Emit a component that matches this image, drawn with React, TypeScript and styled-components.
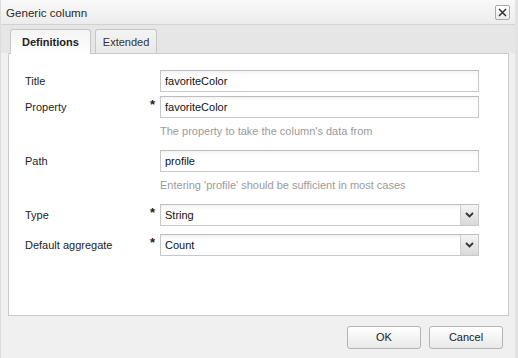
import styled, { createGlobalStyle } from 'styled-components'

const GlobalStyle = createGlobalStyle`
	html, body {
		margin: 0;
		padding: 0;
		background: #f0f0f0;
	}

	body {
		font-family: 'Liberation Sans', Arial, sans-serif;
		font-size: 11px;
		color: #1e1e1e;
	}
`

const Window = styled.div`
	width: 518px;
	height: 358px;
	box-sizing: border-box;
	display: flex;
	flex-direction: column;
	background: #f0f0f0;
	border-left: 1px solid #dcdcdc;
	border-right: 3px solid #e2e2e2;
`

const TitleBar = styled.div`
	height: 24px;
	flex: none;
	display: flex;
	align-items: center;
	justify-content: space-between;
	padding: 0 5px 0 5px;
	background: linear-gradient(#f9f9f9, #ececec);
	border-bottom: 1px solid #d2d2d2;
	font-size: 11.6px;
	color: #2a2a2a;
`

const CloseButton = styled.button`
	width: 15px;
	height: 15px;
	padding: 0;
	display: flex;
	align-items: center;
	justify-content: center;
	background: linear-gradient(#ffffff, #ececec);
	border: 1px solid #a9a9a9;
	border-radius: 2px;
	color: #444;
`

const TabStrip = styled.div`
	height: 28px;
	flex: none;
	display: flex;
	align-items: flex-end;
	gap: 4px;
	padding: 0 0 0 9px;
	background: #e6e6e6;
`

const Tab = styled.div<{ $active?: boolean }>`
	height: ${(p) => (p.$active ? 25 : 24)}px;
	box-sizing: border-box;
	padding: 0 ${(p) => (p.$active ? 11 : 7)}px;
	display: flex;
	align-items: center;
	border: 1px solid #c6c6c6;
	border-bottom: none;
	border-radius: 3px 3px 0 0;
	background: ${(p) => (p.$active ? 'linear-gradient(#f4f4f4, #ffffff)' : 'linear-gradient(#f3f3f3, #e9e9e9)')};
	font-weight: ${(p) => (p.$active ? 'bold' : 'normal')};
	color: ${(p) => (p.$active ? '#222' : '#333')};
	margin-bottom: ${(p) => (p.$active ? -1 : 0)}px;
	position: relative;
`

const Panel = styled.div`
	flex: 1;
	margin: 0 6px 0 7px;
	background: #ffffff;
	border: 1px solid #c9c9c9;
	padding: 16px 0 0 16px;
`

const FieldBlock = styled.div<{ $top: number }>`
	margin-top: ${(p) => p.$top}px;
`

const Row = styled.div`
	display: grid;
	grid-template-columns: 125px 10px 319px;
	align-items: center;
	height: 22px;
`

const Label = styled.span`
	color: #1e1e1e;
`

const Star = styled.span`
	font-size: 13px;
	font-weight: bold;
	line-height: 1;
	align-self: start;
	margin-top: 2px;
	color: #222;
`

const Input = styled.div`
	height: 22px;
	box-sizing: border-box;
	display: flex;
	align-items: center;
	padding-left: 4px;
	border: 1px solid #c8c8c8;
	border-top-color: #bdbdbd;
	background: linear-gradient(#f3f3f3, #ffffff 5px);
	color: #111;
`

const Select = styled(Input)`
	justify-content: space-between;
	padding-right: 0;
`

const DropButton = styled.span`
	width: 17px;
	height: 20px;
	display: flex;
	align-items: center;
	justify-content: center;
	border-left: 1px solid #d0d0d0;
	background: linear-gradient(#f4f4f4, #d9d9d9);
`

const Hint = styled.div`
	margin: 5px 0 0 135px;
	line-height: 16px;
	color: #9a9a9a;
`

const Footer = styled.div`
	height: 42px;
	flex: none;
	display: flex;
	align-items: center;
	justify-content: flex-end;
	gap: 8px;
	padding-right: 12px;
`

const Button = styled.button`
	width: 74px;
	height: 23px;
	border: 1px solid #b4b4b4;
	border-radius: 3px;
	background: linear-gradient(#ffffff, #e9e9e9);
	font-family: inherit;
	font-size: 11px;
	color: #222;
`

function Chevron() {
	return (
		<svg width="9" height="6" viewBox="0 0 9 6">
			<path d="M1 1 L4.5 4.5 L8 1" stroke="#333" strokeWidth="1.8" fill="none" />
		</svg>
	)
}

type FieldProps = {
	label: string
	value: string
	top: number
	required?: boolean
	select?: boolean
	hint?: string
}

function Field({ label, value, top, required, select, hint }: FieldProps) {
	return (
		<FieldBlock $top={top}>
			<Row>
				<Label>{label}</Label>
				<Star>{required ? '*' : ''}</Star>
				{select ? (
					<Select>
						{value}
						<DropButton>
							<Chevron />
						</DropButton>
					</Select>
				) : (
					<Input>{value}</Input>
				)}
			</Row>
			{hint && <Hint>{hint}</Hint>}
		</FieldBlock>
	)
}

export default function App() {
	return (
		<>
			<GlobalStyle />
			<Window>
				<TitleBar>
					<span>Generic column</span>
					<CloseButton>
						<svg width="9" height="9" viewBox="0 0 9 9">
							<path d="M1 1 L8 8 M8 1 L1 8" stroke="#333" strokeWidth="1.5" />
						</svg>
					</CloseButton>
				</TitleBar>
				<TabStrip>
					<Tab $active>Definitions</Tab>
					<Tab>Extended</Tab>
				</TabStrip>
				<Panel>
					<Field label="Title" value="favoriteColor" top={0} />
					<Field
						label="Property"
						value="favoriteColor"
						top={4}
						required
						hint="The property to take the column's data from"
					/>
					<Field
						label="Path"
						value="profile"
						top={11}
						hint="Entering 'profile' should be sufficient in most cases"
					/>
					<Field label="Type" value="String" top={11} required select />
					<Field label="Default aggregate" value="Count" top={8} required select />
				</Panel>
				<Footer>
					<Button>OK</Button>
					<Button>Cancel</Button>
				</Footer>
			</Window>
		</>
	)
}
